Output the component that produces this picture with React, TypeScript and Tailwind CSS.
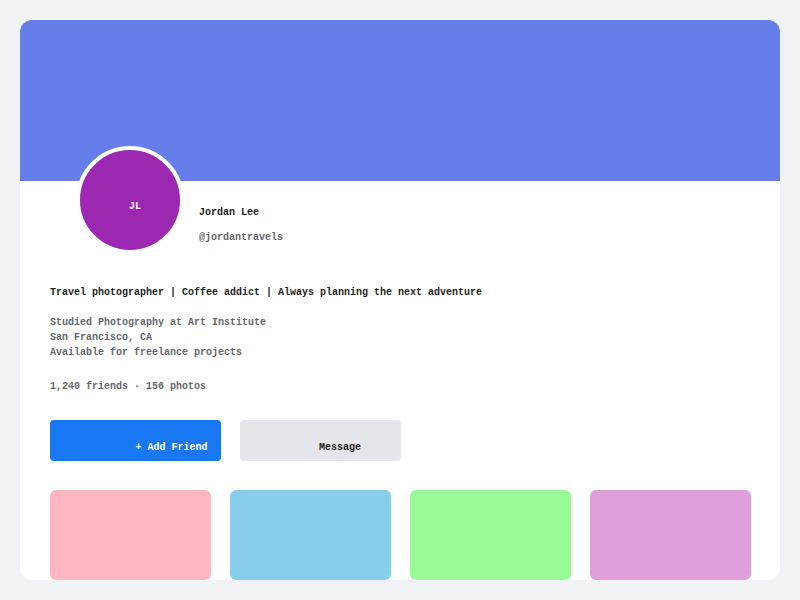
import React from 'react';

const photos = ['bg-[#ffb6c1]', 'bg-[#87ceeb]', 'bg-[#98fb98]', 'bg-[#dda0dd]'];

const ProfileCard = () => {
  return (
    <div className="h-[560px] bg-white rounded-xl overflow-hidden flex flex-col">
      {/* Cover banner */}
      <div className="h-[161px] shrink-0 bg-[#667eea]" />

      {/* Avatar + name */}
      <div className="flex items-start pl-[56px]">
        <div className="-mt-[35px] w-[108px] h-[108px] rounded-full border-4 border-white bg-[#9c27b0] flex items-center justify-center shrink-0">
          <span className="text-white text-[10px] font-bold ml-[10px] mt-[12px]">JL</span>
        </div>
        <div className="ml-[15px] pt-[24px] flex flex-col gap-[10px]">
          <span className="text-[#1c1e21] text-[10px] font-bold leading-[15px]">Jordan Lee</span>
          <span className="text-[#65676b] text-[10px] font-bold leading-[15px]">@jordantravels</span>
        </div>
      </div>

      {/* Bio and details */}
      <div className="px-[30px] flex flex-col">
        <p className="mt-[31px] text-[#1c1e21] text-[10px] font-bold leading-[15px]">
          Travel photographer | Coffee addict | Always planning the next adventure
        </p>
        <div className="mt-[15px] text-[#65676b] text-[10px] font-bold leading-[15px]">
          <div>Studied Photography at Art Institute</div>
          <div>San Francisco, CA</div>
          <div>Available for freelance projects</div>
        </div>
        <div className="mt-[19px] text-[#65676b] text-[10px] font-bold leading-[15px]">
          1,240 friends · 156 photos
        </div>

        {/* Actions */}
        <div className="mt-[26px] flex gap-[19px]">
          <button className="w-[171px] h-[41px] rounded bg-[#1877f2] text-white text-[10px] font-bold pl-[72px] pt-[14px]">
            + Add Friend
          </button>
          <button className="w-[161px] h-[41px] rounded bg-[#e4e6eb] text-[#1c1e21] text-[10px] font-bold pl-[39px] pt-[14px]">
            Message
          </button>
        </div>

        {/* Photo grid */}
        <div className="mt-[29px] grid grid-cols-4 gap-[19px] w-[701px]">
          {photos.map((c) => (
            <div key={c} className={`${c} h-[90px] rounded-md`} />
          ))}
        </div>
      </div>
    </div>
  );
};

export default function App() {
  return (
    <div className="w-[800px] h-[600px] bg-[#f0f2f5] p-5 font-['Liberation_Mono',monospace]">
      <ProfileCard />
    </div>
  );
}
